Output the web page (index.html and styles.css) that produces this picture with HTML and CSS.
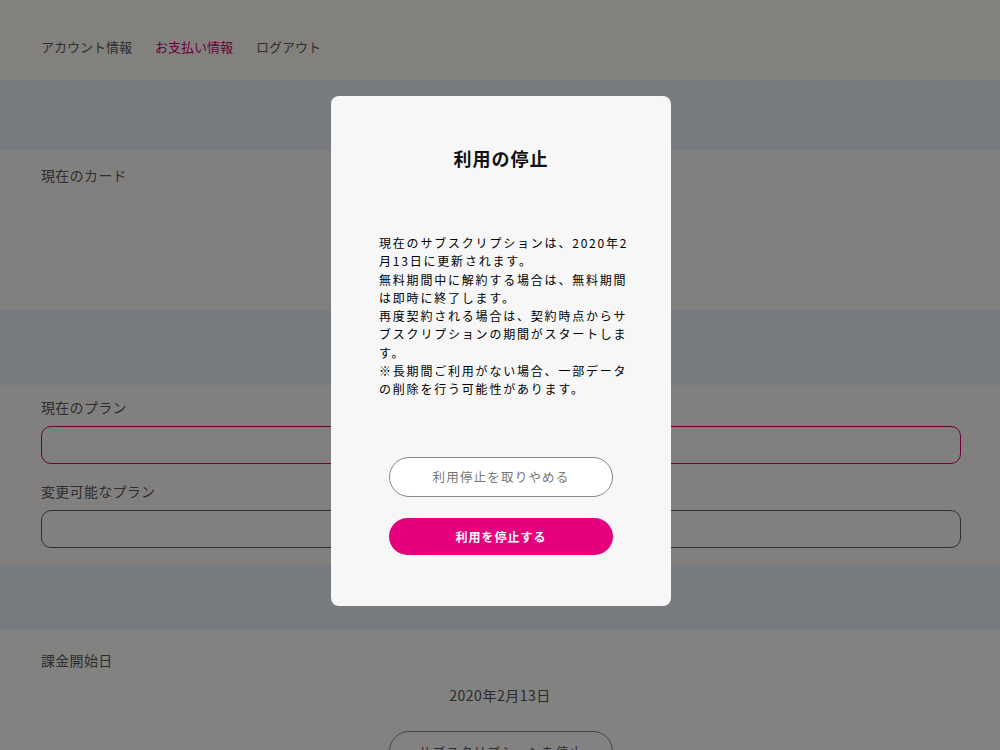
FILE: index.html
```html
<!DOCTYPE html>
<html lang="ja">
<head>
<meta charset="utf-8">
<title>お支払い情報</title>
<link rel="stylesheet" href="styles.css">
</head>
<body>
<div class="page">
  <nav class="nav">
    <a class="nav-item">アカウント情報</a>
    <a class="nav-item active">お支払い情報</a>
    <a class="nav-item">ログアウト</a>
  </nav>
  <div class="band band-1"></div>
  <section class="section card-section">
    <div class="label">現在のカード</div>
  </section>
  <div class="band band-2"></div>
  <section class="section plan-section">
    <div class="label">現在のプラン</div>
    <div class="field field-current"></div>
    <div class="label label-2">変更可能なプラン</div>
    <div class="field"></div>
  </section>
  <div class="band band-3"></div>
  <section class="section billing-section">
    <div class="label">課金開始日</div>
    <div class="date">2020年2月13日</div>
    <button class="btn btn-outline btn-page">サブスクリプションを停止</button>
  </section>
</div>

<div class="overlay">
  <div class="modal">
    <h2 class="modal-title">利用の停止</h2>
    <p class="modal-text">現在のサブスクリプションは、2020年2月13日に更新されます。<br>無料期間中に解約する場合は、無料期間は即時に終了します。<br>再度契約される場合は、契約時点からサブスクリプションの期間がスタートします。<br>※長期間ご利用がない場合、一部データの削除を行う可能性があります。</p>
    <div class="modal-actions">
      <button class="btn btn-outline">利用停止を取りやめる</button>
      <button class="btn btn-primary">利用を停止する</button>
    </div>
  </div>
</div>
</body>
</html>
```
FILE: styles.css
```css
* { box-sizing: border-box; }
html, body {
  margin: 0;
  padding: 0;
  height: 100%;
  overflow: hidden;
}
body {
  font-family: "Noto Sans CJK JP", "Noto Sans", sans-serif;
  background: #ecf3fc;
  color: #666;
}
.page {
  display: flex;
  flex-direction: column;
}
.nav {
  height: 80px;
  background: #fffdf6;
  display: flex;
  align-items: flex-start;
  padding: 37px 0 0 41px;
  gap: 23px;
}
.nav-item {
  font-size: 13px;
  line-height: 20px;
  color: #5a5a5a;
}
.nav-item.active { color: #d4007a; }
.band { background: #ebf3fd; }
.band-1 { height: 70px; }
.band-2 { height: 75px; }
.band-3 { height: 65px; }
.section {
  background: #fffbfa;
  padding: 0 39px 0 41px;
  display: flex;
  flex-direction: column;
}
.card-section { height: 160px; padding-top: 15px; }
.plan-section { height: 180px; padding-top: 12px; background: #fffafa; }
.billing-section { height: 200px; padding-top: 20px; background: #fffffc; align-items: flex-start; }
.label {
  font-size: 14px;
  line-height: 20px;
  color: #5a5a5a;
  letter-spacing: 0.3px;
}
.field {
  height: 38px;
  border: 1px solid #5e5e5e;
  border-radius: 10px;
  margin-top: 9px;
  width: 920px;
}
.field-current { border-color: #d8007c; }
.label-2 { margin-top: 17px; }
.date {
  align-self: center;
  font-size: 14px;
  line-height: 20px;
  letter-spacing: 0.5px;
  margin: 15px 0 0 -2px;
  color: #555;
}
.btn {
  font-family: "Noto Sans CJK JP", "Noto Sans", sans-serif;
  width: 224px;
  border-radius: 20px;
  cursor: pointer;
}
.btn-outline {
  height: 40px;
  background: #fff;
  border: 1px solid #888;
  color: #777;
  font-size: 12.5px;
  letter-spacing: 1.2px;
}
.btn-page {
  align-self: center;
  margin: 26px 0 0 0;
  color: #555;
}
.btn-primary {
  height: 37px;
  border: none;
  background: #e6007e;
  color: #fff;
  font-weight: bold;
  font-size: 12px;
  letter-spacing: 1px;
}
.overlay {
  position: fixed;
  inset: 0;
  background: rgba(0, 0, 0, 0.49);
  display: flex;
  justify-content: center;
  align-items: flex-start;
  padding: 96px 0 0 2px;
}
.modal {
  width: 340px;
  height: 510px;
  background: #f7f7f7;
  border-radius: 8px;
  padding: 49px 40px 0 48px;
  display: flex;
  flex-direction: column;
  color: #111;
}
.modal-title {
  margin: 0;
  text-align: center;
  font-size: 18px;
  line-height: 27px;
  font-weight: bold;
  letter-spacing: 1px;
  padding-right: 8px;
  color: #111;
}
.modal-text {
  margin: 62px 0 0 0;
  width: 252px;
  font-size: 12px;
  line-height: 18.3px;
  letter-spacing: 1.8px;
  color: #000;
  font-weight: 400;
}
.modal-actions {
  margin: 58px 0 0 -48px;
  width: 340px;
  display: flex;
  flex-direction: column;
  align-items: center;
  gap: 21px;
}
```
